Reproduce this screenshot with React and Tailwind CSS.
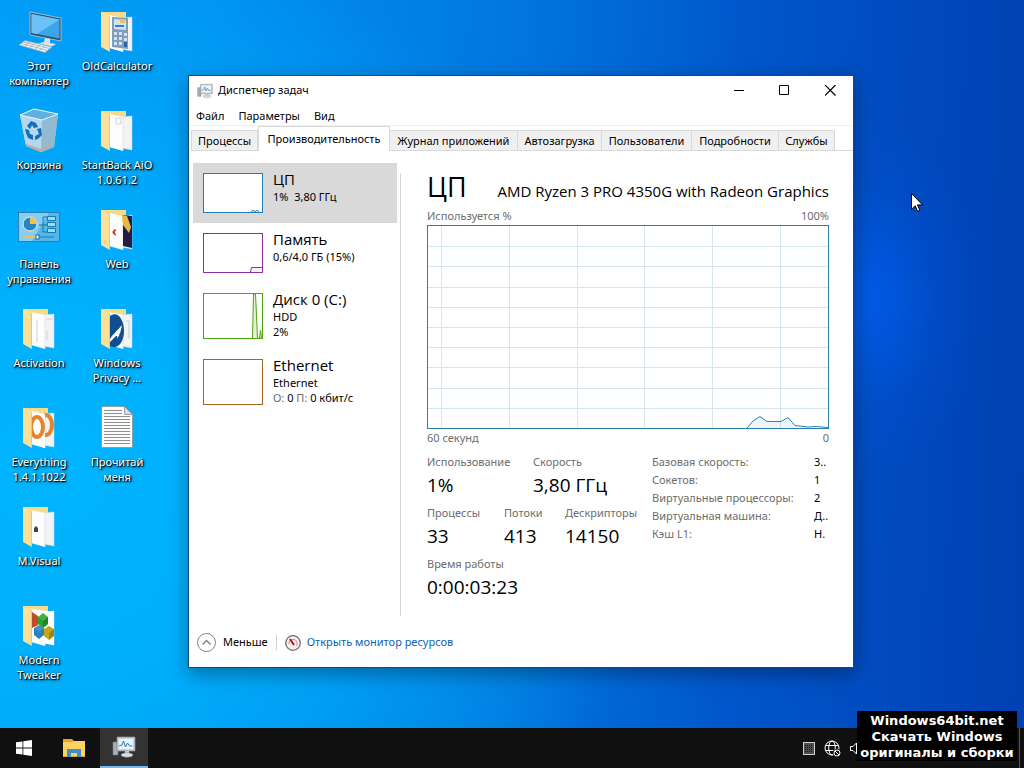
const LABEL = "text-[#6d6d6d]";

function FolderIcon({ children }) {
  return (
    <svg width="48" height="48" viewBox="0 0 48 48" aria-hidden="true">
      <path d="M8 4h25v36H12z" fill="#f5da8b" />
      <path d="M28 10l11-1v34l-11-2z" fill="#f1f3f4" />
      <path d="M28 10l11-1v34l-11-2z" fill="none" stroke="#d3dade" strokeWidth=".5" />
      <path d="M16 7l14 3v34l-14-4z" fill="#fdfdfd" />
      <path d="M30 10v34" stroke="#d9dee1" strokeWidth=".7" />
      {children}
      <path d="M8 4l9 4v36l-9-5z" fill="#fbe09a" />
      <path d="M16.500 8v36" stroke="#e3c172" strokeWidth=".8" />
    </svg>
  );
}

function ComputerIcon() {
  return (
    <svg width="48" height="48" viewBox="0 0 48 48" aria-hidden="true">
      <path d="M15 4l31 6v23l-31-6z" fill="#2c4f6b" stroke="#b9d3e4" strokeWidth=".8" />
      <path d="M16.500 6L44.500 11.500v19l-28-5.500z" fill="#3ba4ea" />
      <path d="M16.500 6L44.500 11.500 22 26l-5.500-1z" fill="#6cc2f6" />
      <path d="M30 30l5 1v4l6 1-4 2.500-14-3 6-1.500z" fill="#dbe3e8" />
      <path d="M10 32.500l27 6.500-7 5.500L4 37z" fill="#eef2f4" stroke="#8fa8b7" strokeWidth=".8" />
      <path d="M8.500 34l26 6.500M6.500 35.500l26 7M15 34l-5 4M20 35l-5 4.500M25 36.500l-5 4.500M30 37.500l-5 5" stroke="#9caeb9" strokeWidth=".8" />
    </svg>
  );
}

function BinIcon() {
  return (
    <svg width="48" height="48" viewBox="0 0 48 48" aria-hidden="true">
      <path d="M5 8l14-6 24 5-4 33-13 5-15-6z" fill="#a9cfe6" />
      <path d="M5 8l22 5-1 32-15-6z" fill="#b5d8ed" />
      <path d="M27 13l16-6-4 33-13 5z" fill="#92bbd3" />
      <path d="M5 8l14-6 24 5-16 6z" fill="#5fb0de" stroke="#e7f5fc" strokeWidth="1" />
      <path d="M11 37l15 5 13-4v2l-13 5-15-6z" fill="#b9aca1" />
      <g fill="#156fbe">
        <path d="M12 19l4-5 5 2 2 4-4 1-2-3-2 4z" />
        <path d="M22 22l4-1 1 7-4 4-3 1v-4l4-2z" />
        <path d="M10 22l4 1 1 4 3 1v5l-5-2-2-5z" />
      </g>
    </svg>
  );
}

function ControlPanelIcon() {
  return (
    <svg width="48" height="48" viewBox="0 0 48 48" aria-hidden="true">
      <rect x="3" y="6" width="42" height="30" fill="#2c80b4" />
      <rect x="4" y="7" width="40" height="28" fill="#55b6e8" />
      <path d="M4 7h30L17 35H4z" fill="#86cdf1" />
      <circle cx="15" cy="18" r="7" fill="#2586c2" stroke="#e6f6fd" strokeWidth="1" />
      <path d="M15 18v-7a7 7 0 0 1 7 7z" fill="#f4bf4b" />
      <path d="M24 19h4v-8h4M28 19h4M28 19v7h4" stroke="#1b74a8" fill="none" />
      <path d="M32.500 10.500h8v4h-8zM32.500 16.500h8v4h-8zM32.500 22.500h8v4h-8z" fill="#9ddaf5" stroke="#1678b0" />
      <path d="M9 31h12" stroke="#f4bf4b" strokeWidth="2" />
      <path d="M23 31h16" stroke="#1f7db4" strokeWidth="1" />
      <rect x="21" y="29" width="3" height="4" fill="#fff" stroke="#196fa5" />
    </svg>
  );
}

function TextFileIcon() {
  return (
    <svg width="48" height="48" viewBox="0 0 48 48" aria-hidden="true">
      <path d="M8.500 2.500h23l8 8v33h-31z" fill="#fbfbfb" stroke="#8a8f93" strokeWidth=".8" />
      <path d="M31.500 2.500v8h8z" fill="#cfe0ec" stroke="#8a8f93" strokeWidth=".8" />
      <path d="M11 6.500h18M11 9.500h18M11 12.500h26M11 15.500h26M11 18.500h26M11 21.500h26M11 24.500h26M11 27.500h26M11 30.500h26M11 33.500h26M11 36.500h26M11 39.500h26" stroke="#8f8f8f" />
    </svg>
  );
}

const calculator = (
  <g>
    <path d="M19 9l16 1v31l-16-2z" fill="#7f9fbd" />
    <path d="M21 11l12 1v10l-12-1z" fill="#cfe3f5" />
    <path d="M21 24h3v3h-3zM26 24h3v3h-3zM31 25h3v3h-3zM21 29h3v3h-3zM26 29h3v3h-3zM31 30h3v3h-3zM21 34h3v3h-3zM26 34h3v3h-3z" fill="#d5e4f0" />
    <path d="M31 34h3v5h-3z" fill="#2a67a5" />
    <path d="M27 11h5v4h-5z" fill="#e2c66d" />
    <path d="M22 18h9" stroke="#3d80bf" strokeWidth="2" />
  </g>
);
const pages = <path d="M23 11h5v6h-5z" fill="none" stroke="#cfd3d3" />;
const web = (
  <g>
    <path d="M30 9l9 1v32l-9-2z" fill="#251b46" />
    <path d="M29 9l5 1 4 11-2 6-6-8z" fill="#e9b840" />
    <path d="M23 24c-4-1-4 5 0 5-2-1-2-4 0-5z" fill="#d0352b" stroke="#d0352b" />
  </g>
);
const bird = (
  <g>
    <path d="M17 11c8-6 14 4 14 15 0 12-7 19-14 15z" fill="#0f4f8f" />
    <path d="M17 34c2-4 8-9 12-14-1 5-2 10-5 14 1-3 0-3-1-3l-6 6z" fill="#fff" />
    <path d="M33 16h3v18" fill="none" stroke="#b9cde4" />
  </g>
);
const search = (
  <g fill="none" stroke="#e8852b" strokeWidth="4">
    <ellipse cx="31" cy="21" rx="6" ry="10" />
    <path d="M16 7l14 3v34l-14-4z" fill="#fff" stroke="none" />
    <ellipse cx="22" cy="23" rx="6" ry="10" />
  </g>
);
const lines = <path d="M22 15v22M31 14h7M32 26v9" fill="none" stroke="#cfd2d2" />;
const apple = <path d="M19 25l2-2 2 2v4h-4z" fill="#444" />;
const hexes = (
  <g>
    <path d="M16 7l23 3v33l-23-4z" fill="#fff" />
    <path d="M17 10l6 4v9l-6 3z" fill="#c34a25" />
    <path d="M28 11l5 4v7l-5 4-5-4v-7z" fill="#28a52e" />
    <path d="M24 23l5 3v7l-5 4-5-4v-7z" fill="#2a82bd" />
    <path d="M34 24l5 3v7l-5 4-5-4v-7z" fill="#c3a719" />
    <path d="M28 11l5 4-5 4-5-4zM24 23l5 3-5 4-5-4z" fill="#fff" opacity=".12" />
    <path d="M28 19l5-4v7l-5 4zM34 31l5-4v7l-5 4z" fill="#000" opacity=".2" />
  </g>
);

const shortcuts = [
  [
    { name: "Этот компьютер", icon: <ComputerIcon /> },
    { name: "Корзина", icon: <BinIcon /> },
    { name: "Панель управления", icon: <ControlPanelIcon /> },
    { name: "Activation", icon: <FolderIcon>{lines}</FolderIcon> },
    { name: "Everything 1.4.1.1022", icon: <FolderIcon>{search}</FolderIcon> },
    { name: "M.Visual", icon: <FolderIcon>{apple}</FolderIcon> },
    { name: "Modern Tweaker", icon: <FolderIcon>{hexes}</FolderIcon> },
  ],
  [
    { name: "OldCalculator", icon: <FolderIcon>{calculator}</FolderIcon> },
    { name: "StartBack AiO 1.0.61.2", icon: <FolderIcon>{pages}</FolderIcon> },
    { name: "Web", icon: <FolderIcon>{web}</FolderIcon> },
    { name: "Windows Privacy ...", icon: <FolderIcon>{bird}</FolderIcon> },
    { name: "Прочитай меня", icon: <TextFileIcon /> },
  ],
];

function Desktop() {
  return (
    <div className="flex">
      {shortcuts.map((column, i) => (
        <div key={i} className="flex w-[78px] flex-col pt-2">
          {column.map((item) => (
            <button key={item.name} type="button" className="flex h-[99px] w-full flex-col items-center gap-[2px]">
              {item.icon}
              <span className="px-px text-[11px] leading-[15px] text-white [text-shadow:1px_1px_1px_#000,1px_1px_3px_#000]">
                {item.name}
              </span>
            </button>
          ))}
        </div>
      ))}
    </div>
  );
}

function MonitorIcon({ className }) {
  return (
    <svg className={className} viewBox="0 0 24 22" aria-hidden="true">
      <path d="M1 6h5v13H1z" fill="#a9aeb0" stroke="#777c7e" strokeWidth=".6" />
      <path d="M5 1h18v14H5z" fill="#d0d3d4" stroke="#84898c" strokeWidth=".8" />
      <path d="M7 3h14v10H7z" fill="#eaf5fc" />
      <path d="M7 10l3-1 1.500-4 2 6 2-4 2 3h3" fill="none" stroke="#2a78b4" strokeWidth="1" />
      <path d="M13 15h4v3h-4z" fill="#c6cacc" />
      <ellipse cx="15" cy="19" rx="6" ry="2.200" fill="#dadddf" stroke="#8b9092" strokeWidth=".5" />
    </svg>
  );
}

function TitleBar() {
  return (
    <div className="flex h-[29px] items-center">
      <MonitorIcon className="ml-2 h-4 w-4" />
      <h1 className="ml-[5px] flex-1 text-[11px]">Диспетчер задач</h1>
      <button type="button" aria-label="Свернуть" className="flex h-full w-[46px] items-center justify-center">
        <svg width="11" height="11" viewBox="0 0 11 11"><path d="M0 5.500h10" stroke="#000" /></svg>
      </button>
      <button type="button" aria-label="Развернуть" className="flex h-full w-[45px] items-center justify-center">
        <svg width="11" height="11" viewBox="0 0 11 11"><path d="M.5.5h9v9h-9z" fill="none" stroke="#000" /></svg>
      </button>
      <button type="button" aria-label="Закрыть" className="flex h-full w-[46px] items-center justify-center">
        <svg width="11" height="11" viewBox="0 0 11 11"><path d="M0 0l10.500 10.500M10.500 0L0 10.500" stroke="#000" strokeWidth="1.200" /></svg>
      </button>
    </div>
  );
}

function Tabs() {
  const tabs = [
    ["Процессы", "w-[67px]"],
    ["Производительность", "w-[132px]"],
    ["Журнал приложений", "w-[128px]"],
    ["Автозагрузка", "w-[84px]"],
    ["Пользователи", "w-[90px]"],
    ["Подробности", "w-[87px]"],
    ["Службы", "w-[56px]"],
  ];
  return (
    <div role="tablist" className="flex h-[25px] items-end pl-[2px]">
      {tabs.map(([name, width], i) => (
        <button
          key={name}
          type="button"
          role="tab"
          aria-selected={i === 1}
          className={
            i === 1
              ? `${width} h-[25px] shrink-0 whitespace-nowrap border-x border-t border-[#d9d9d9] bg-white text-[11px] leading-4`
              : `${width} h-[21px] shrink-0 whitespace-nowrap border-y border-r border-[#d9d9d9] bg-[#f0f0f0] pt-px text-[11px] leading-4 first:border-l`
          }
        >
          {name}
        </button>
      ))}
      <div className="h-px flex-1 bg-[#d9d9d9]" />
    </div>
  );
}

function MiniGraph({ color, tall, children }) {
  return (
    <svg width="60" height={tall ? 46 : 40} className="shrink-0" aria-hidden="true" stroke={color} fill="none">
      <rect x=".5" y=".5" width="59" height={tall ? 45 : 39} fill="#fff" />
      {children}
    </svg>
  );
}

function Sidebar() {
  const items = [
    {
      name: "ЦП",
      lines: ["1%  3,80 ГГц"],
      graph: <MiniGraph color="#1f7eb5"><path d="M48 38.500l2-1 2 1 2-1 2 1" /></MiniGraph>,
    },
    {
      name: "Память",
      lines: ["0,6/4,0 ГБ (15%)"],
      graph: <MiniGraph color="#8b2fa3"><path d="M47.500 39l1-4.500h11V39" fill="#f5eef8" /></MiniGraph>,
    },
    {
      name: "Диск 0 (C:)",
      lines: ["HDD", "2%"],
      graph: (
        <MiniGraph color="#4da60c" tall>
          <path d="M49.500 45l1-44h2l2 44M56.500 45l1-8 1 8" fill="#e4f1d8" />
        </MiniGraph>
      ),
    },
    {
      name: "Ethernet",
      lines: ["Ethernet"],
      traffic: true,
      graph: <MiniGraph color="#a5661f" tall />,
    },
  ];
  return (
    <nav className="w-[211px] shrink-0 pl-1 pt-3">
      {items.map((item, i) => {
        const tall = i > 1;
        return (
          <button
            key={item.name}
            type="button"
            className={`flex w-[204px] gap-[10px] pl-[10px] pt-[10px] text-left ${tall ? "h-[66px]" : "h-[60px]"} ${i === 0 ? "bg-[#d9d9d9]" : ""}`}
          >
            {item.graph}
            <span className="-mt-1 flex flex-col whitespace-pre text-[11px] leading-[15px]">
              <span className="font-['Open_Sans','Noto_Sans',sans-serif] text-[15px] leading-5">{item.name}</span>
              {item.lines.map((line) => <span key={line}>{line}</span>)}
              {item.traffic && (
                <span><span className={LABEL}>О:</span> 0 <span className={LABEL}>П:</span> 0 кбит/с</span>
              )}
            </span>
          </button>
        );
      })}
    </nav>
  );
}

function CpuGraph() {
  return (
    <svg className="h-[204px] w-full" viewBox="0 0 402 204" preserveAspectRatio="none" aria-label="Используется %">
      <path
        d="M14.500 0v204M82.500 0v204M150.500 0v204M217.500 0v204M285.500 0v204M353.500 0v204M0 21.500h402M0 41.500h402M0 62.500h402M0 82.500h402M0 102.500h402M0 122.500h402M0 142.500h402M0 163.500h402M0 183.500h402"
        stroke="#d7e6ee"
      />
      <path
        d="M320 203l6-7 7-4.500 7 5h14l7-4 7 8 13 1.500 8-.5 12 1"
        fill="#117dbb"
        fillOpacity=".08"
        stroke="#2b86bb"
      />
      <rect x=".5" y=".5" width="401" height="203" fill="none" stroke="#2b7fa8" />
    </svg>
  );
}

function Stat({ label, value, className }) {
  return (
    <div className={className}>
      <dt className={`text-[11px] leading-4 ${LABEL}`}>{label}</dt>
      <dd className="pt-[2px] font-['Open_Sans','Noto_Sans',sans-serif] text-[19px] leading-[26px]">{value}</dd>
    </div>
  );
}

function Details() {
  const facts = [
    ["Базовая скорость:", "3.."],
    ["Сокетов:", "1"],
    ["Виртуальные процессоры:", "2"],
    ["Виртуальная машина:", "Д.."],
    ["Кэш L1:", "Н."],
  ];
  return (
    <section className="mt-[22px] min-w-0 flex-1 border-l border-[#d5d5d5] pl-[26px] pr-6">
      <div className="flex h-[35px] items-baseline justify-between">
        <h2 className="font-['Open_Sans','Noto_Sans',sans-serif] text-[27px] leading-[28px]">ЦП</h2>
        <p className="whitespace-nowrap font-['Open_Sans','Noto_Sans',sans-serif] text-[15px]">AMD Ryzen 3 PRO 4350G with Radeon Graphics</p>
      </div>
      <div className={`flex justify-between pb-px text-[11px] leading-4 ${LABEL}`}>
        <span>Используется %</span>
        <span>100%</span>
      </div>
      <CpuGraph />
      <div className={`flex justify-between pt-px text-[11px] leading-4 ${LABEL}`}>
        <span>60 секунд</span>
        <span>0</span>
      </div>
      <div className="flex pb-4 pt-2">
        <dl className="flex w-[225px] shrink-0 flex-col gap-[7px] whitespace-nowrap">
          <div className="flex">
            <Stat label="Использование" value="1%" className="w-[106px]" />
            <Stat label="Скорость" value="3,80 ГГц" />
          </div>
          <div className="flex">
            <Stat label="Процессы" value="33" className="w-[77px]" />
            <Stat label="Потоки" value="413" className="w-[61px]" />
            <Stat label="Дескрипторы" value="14150" />
          </div>
          <Stat label="Время работы" value="0:00:03:23" />
        </dl>
        <table className="-mt-px h-[90px] flex-1 self-start whitespace-nowrap text-left text-[11px] leading-[18px]">
          <tbody>
            {facts.map(([label, value]) => (
              <tr key={label}>
                <th className={`w-[162px] p-0 font-normal ${LABEL}`}>{label}</th>
                <td className="p-0">{value}</td>
              </tr>
            ))}
          </tbody>
        </table>
      </div>
    </section>
  );
}

function TaskManager() {
  return (
    <main className="absolute left-[188px] right-[170px] top-[75px] border border-[#0c4d7d] bg-white text-black shadow-[0_6px_18px_rgba(0,0,0,0.35)]">
      <TitleBar />
      <nav className="flex h-[21px] gap-[14px] border-b border-[#f0f0f0] pl-[7px] text-[11px] leading-[21px]">
        <button type="button">Файл</button>
        <button type="button">Параметры</button>
        <button type="button">Вид</button>
      </nav>
      <Tabs />
      <div className="flex">
        <Sidebar />
        <Details />
      </div>
      <footer className="flex h-[51px] items-center pl-2 pt-[2px] text-[11px]">
        <button type="button" className="flex items-center gap-[7px]">
          <svg width="19" height="19" viewBox="0 0 19 19" fill="none" stroke="#858585">
            <circle cx="9.500" cy="9.500" r="9" />
            <path d="M5.500 11.500l4-4 4 4" strokeWidth="1.500" />
          </svg>
          Меньше
        </button>
        <a href="#monitor" className="ml-2 flex h-[15px] items-center gap-[6px] border-l border-[#d0d0d0] pl-2 text-[#0f62b5]">
          <svg width="16" height="16" viewBox="0 0 16 16">
            <circle cx="8" cy="8" r="7.300" fill="#f6eeee" stroke="#6e6e6e" strokeWidth="1.300" />
            <path d="M4 9a4 4 0 0 1 8-1v3" fill="none" stroke="#c98f8f" />
            <path d="M5 4l4 6" stroke="#b81414" strokeWidth="2" />
          </svg>
          Открыть монитор ресурсов
        </a>
      </footer>
    </main>
  );
}

function Taskbar() {
  return (
    <footer className="relative flex h-10 items-center bg-[#101010]">
      <button type="button" aria-label="Пуск" className="flex h-full w-12 items-center justify-center">
        <svg width="16" height="16" viewBox="0 0 16 16" fill="#fff">
          <path d="M0 2.300l6.500-.9v6.100H0zM7.300 1.300L16 0v7.500H7.300zM0 8.400h6.500v6.200L0 13.700zM7.300 8.400H16V16l-8.700-1.300z" />
        </svg>
      </button>
      <button type="button" aria-label="Проводник" className="flex h-full w-[52px] items-center justify-center">
        <svg width="22" height="18" viewBox="0 0 22 18">
          <path d="M0 0h9l2 2h11v16H0z" fill="#e5a52c" />
          <path d="M0 3h9l2-1h11v15H0z" fill="#fbd263" />
          <path d="M4 18v-8h14v8h-4v-4H8v4z" fill="#3e8fc7" />
        </svg>
      </button>
      <button type="button" aria-label="Диспетчер задач" className="flex h-full w-12 items-center justify-center border-b-2 border-[#76b9ed] bg-[#333]">
        <MonitorIcon className="h-[22px] w-6" />
      </button>
      <div className="ml-auto mr-1 flex h-full items-center gap-[9px] border-r border-[#555] pr-[159px]">
        <svg width="12" height="13" viewBox="0 0 12 13">
          <rect x=".5" y=".5" width="11" height="12" fill="#4d4d4d" stroke="#d0d0d0" />
          <path d="M2 3.500h8M2 5.500h8M2 7.500h8M2 9.500h8" stroke="#161616" strokeDasharray="1 1" />
        </svg>
        <svg width="17" height="17" viewBox="0 0 17 17" fill="none" stroke="#fff">
          <circle cx="8" cy="8" r="7" />
          <ellipse cx="8" cy="8" rx="3.300" ry="7" />
          <path d="M1.500 5.500h13M1.500 10.500h8" />
          <circle cx="13" cy="13" r="4" fill="#101010" stroke="none" />
          <circle cx="13" cy="13" r="3" />
          <path d="M11 11l4 4" />
        </svg>
        <svg width="10" height="13" viewBox="0 0 10 13" fill="none" stroke="#fff">
          <path d="M.5 4.500h2.500l3.500-3.500v11L3 8.500H.5z" />
          <path d="M8 8l2 2" stroke="#e33" />
        </svg>
      </div>
      <aside className="absolute bottom-[7px] right-[7px] w-40 bg-black pt-[2px] text-center font-['DejaVu_Sans'] text-[13px] font-bold leading-4 text-white">
        Windows64bit.net<br />Скачать Windows<br />оригиналы и сборки
      </aside>
    </footer>
  );
}

export default function App() {
  return (
    <div className="flex min-h-screen flex-col overflow-hidden bg-[#0078e0] font-['Noto_Sans','Open_Sans',sans-serif]">
      <div className="relative flex-1 bg-[radial-gradient(ellipse_110px_180px_at_872px_300px,rgba(0,96,245,0.7)_0%,rgba(0,84,220,0.25)_60%,rgba(0,70,200,0)_100%),radial-gradient(ellipse_60%_75%_at_5%_65%,#00b4ff_0%,rgba(0,180,255,0.85)_35%,rgba(0,160,245,0)_100%),linear-gradient(92deg,#0098f5_0%,#0092f0_20%,#0076de_50%,#0056ca_72%,#0040b4_100%)]">
        <Desktop />
        <TaskManager />
        <svg width="12" height="19" viewBox="0 0 12 19" className="absolute left-[911px] top-[193px]" aria-hidden="true">
          <path d="M.5.5v15.800l3.700-3.500 2.400 5.500 2.300-1-2.400-5.400h5z" fill="#fff" stroke="#000" />
        </svg>
      </div>
      <Taskbar />
    </div>
  );
}
